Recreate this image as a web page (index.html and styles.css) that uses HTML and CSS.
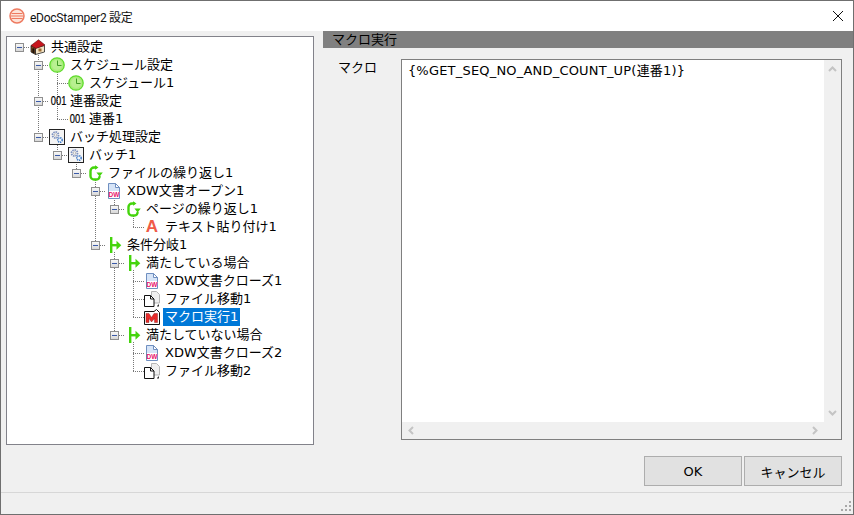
FILE: index.html
```html
<!DOCTYPE html>
<html lang="ja">
<head>
<meta charset="utf-8">
<title>eDocStamper2 設定</title>
<link rel="stylesheet" href="styles.css">
</head>
<body>
<svg class="defs" width="0" height="0" aria-hidden="true">
  <defs>
    <symbol id="i-house" viewBox="0 0 16 16">
      <path d="M1 6.500 5.500 9v6.500L1 13z" fill="#7a4a20" stroke="#222" stroke-width=".8"/>
      <path d="M5.500 9 14.500 6.500V13l-9 2.500z" fill="#f3e3c4" stroke="#222" stroke-width=".8"/>
      <path d="M1 6.500 8.500.8 15 6 6 9.500z" fill="#c8161d" stroke="#5a1010" stroke-width=".6"/>
      <rect x="2.400" y="9.400" width="2" height="4.600" fill="#1c1208"/>
      <rect x="8.500" y="9.500" width="3" height="3" fill="#9a6a30"/>
    </symbol>
    <symbol id="i-clock" viewBox="0 0 16 16">
      <circle cx="8" cy="8" r="7.200" fill="#a8ec7a" stroke="#5fdc2c" stroke-width="1.300"/>
      <circle cx="8" cy="8" r="5" fill="#b8f090"/>
      <path d="M8.500 3.500v5h4" fill="none" stroke="#3f9a24" stroke-width="1"/>
    </symbol>
    <symbol id="i-gears" viewBox="0 0 16 16">
      <rect x=".5" y=".5" width="15" height="15" fill="#f4f4f4" stroke="#222"/>
      <circle cx="6.500" cy="6" r="3" fill="none" stroke="#7f93c0" stroke-width="1.800" stroke-dasharray="1.500 .8"/>
      <circle cx="6.500" cy="6" r="1.200" fill="#fff" stroke="#8a8a8a" stroke-width=".5"/>
      <circle cx="11" cy="11" r="2.200" fill="none" stroke="#3a78c8" stroke-width="1.500" stroke-dasharray="1.200 .7"/>
    </symbol>
    <symbol id="i-loop" viewBox="0 0 16 16">
      <path d="M9.500 2.500H7A3.500 3.500 0 0 0 3.500 6v5A3.500 3.500 0 0 0 7 14.500h2.500A3 3 0 0 0 12.500 11" fill="none" stroke="#44d40c" stroke-width="2.400"/>
      <path d="M8 .3v4.400l3.500-2.200zM9.400 7.500h6.400l-3.200 4z" fill="#44d40c"/>
    </symbol>
    <symbol id="i-branch" viewBox="0 0 16 16">
      <path d="M4 0h2.400v16H4z" fill="#44d40c"/>
      <path d="M6 7h5v2.400H6z" fill="#44d40c"/>
      <path d="M10.500 3.700 15.300 8.200l-4.800 4.500z" fill="#44d40c"/>
    </symbol>
    <symbol id="i-xdw" viewBox="0 0 16 16">
      <path d="M2.500.5h7l4 4v11h-11z" fill="#d6e4f7" stroke="#6f8fc0"/>
      <path d="M9.500.5v4h4z" fill="#fff" stroke="#6f8fc0"/>
      <rect x="3" y="8" width="10" height="7" fill="#fff"/>
      <text x="8" y="14.400" class="dw">DW</text>
    </symbol>
    <symbol id="i-move" viewBox="0 0 16 16">
      <path d="M7.500.5h5l3 3v8.500h-8z" fill="#efefef" stroke="#b5b5b5"/>
      <path d="M.5 4.500h6l3.500 3.500v7.500H.5z" fill="#fff" stroke="#111"/>
      <path d="M6.500 4.500V8H10" fill="none" stroke="#111"/>
      <path d="M12 15.500h1v-1h1v-1h1v2z" fill="#333"/>
    </symbol>
    <symbol id="i-macro" viewBox="0 0 16 16">
      <path d="M.5 2.500H10l2.500-2 3 3v12H.5z" fill="#fff" stroke="#111"/>
      <path d="M2 13.500V4.500h3l2.500 4 2.500-4h3.500v9h-3V9.500L7.500 13 5 9.500v4z" fill="#e82c2c" stroke="#7a1414" stroke-width=".4"/>
    </symbol>
  </defs>
</svg>

<div class="window">
  <header class="titlebar">
    <svg class="app-icon" viewBox="0 0 16 16" width="16" height="16">
      <circle cx="8" cy="8" r="7" fill="#fde3d8" stroke="#ee7a60" stroke-width="1.500"/>
      <path d="M2.500 5.500h11M1.800 8h12.400M2.500 10.500h11" stroke="#ee7a60" stroke-width="1.200"/>
    </svg>
    <span class="title">eDocStamper2 設定</span>
    <svg class="close" viewBox="0 0 10 10" width="10" height="10">
      <path d="M0 0 10 10M10 0 0 10" stroke="#111" stroke-width="1" fill="none"/>
    </svg>
  </header>

  <main class="content">
    <nav class="tree">
      <svg class="connectors" viewBox="7 37 306 407" width="306" height="407" aria-hidden="true">
        <path d="M24 47.500h6M43 65.500h6M43 101.500h6M43 137.500h6M62 155.500h6M81 173.500h6M100 191.500h6M119 209.500h6M100 245.500h6M119 263.500h6M119 335.500h6
                 M57 83.500h11M57 119.500h11M133 227.500h11M133 281.500h11M133 299.500h11M133 317.500h11M133 353.500h11M133 371.500h11
                 M38.500 53v84M57.500 72v47M57.500 145v6M76.500 162v7M95.500 180v61M114.500 198v7M133.500 216v11M114.500 252v79M133.500 270v47M133.500 342v29"
              fill="none" stroke="#777" stroke-width="1" stroke-dasharray="1 1"/>
      </svg>
      <ul class="nodes root">
        <li>
          <div class="row"><span class="toggle"></span><svg class="icon"><use href="#i-house"/></svg><span class="label">共通設定</span></div>
          <ul class="nodes">
            <li>
              <div class="row"><span class="toggle"></span><svg class="icon"><use href="#i-clock"/></svg><span class="label">スケジュール設定</span></div>
              <ul class="nodes">
                <li><div class="row"><span class="toggle none"></span><svg class="icon"><use href="#i-clock"/></svg><span class="label">スケジュール1</span></div></li>
              </ul>
            </li>
            <li>
              <div class="row"><span class="toggle"></span><span class="icon seq">001</span><span class="label">連番設定</span></div>
              <ul class="nodes">
                <li><div class="row"><span class="toggle none"></span><span class="icon seq">001</span><span class="label">連番1</span></div></li>
              </ul>
            </li>
            <li>
              <div class="row"><span class="toggle"></span><svg class="icon"><use href="#i-gears"/></svg><span class="label">バッチ処理設定</span></div>
              <ul class="nodes">
                <li>
                  <div class="row"><span class="toggle"></span><svg class="icon"><use href="#i-gears"/></svg><span class="label">バッチ1</span></div>
                  <ul class="nodes">
                    <li>
                      <div class="row"><span class="toggle"></span><svg class="icon"><use href="#i-loop"/></svg><span class="label">ファイルの繰り返し1</span></div>
                      <ul class="nodes">
                        <li>
                          <div class="row"><span class="toggle"></span><svg class="icon"><use href="#i-xdw"/></svg><span class="label">XDW文書オープン1</span></div>
                          <ul class="nodes">
                            <li>
                              <div class="row"><span class="toggle"></span><svg class="icon"><use href="#i-loop"/></svg><span class="label">ページの繰り返し1</span></div>
                              <ul class="nodes">
                                <li><div class="row"><span class="toggle none"></span><span class="icon letter">A</span><span class="label">テキスト貼り付け1</span></div></li>
                              </ul>
                            </li>
                          </ul>
                        </li>
                        <li>
                          <div class="row"><span class="toggle"></span><svg class="icon"><use href="#i-branch"/></svg><span class="label">条件分岐1</span></div>
                          <ul class="nodes">
                            <li>
                              <div class="row"><span class="toggle"></span><svg class="icon"><use href="#i-branch"/></svg><span class="label">満たしている場合</span></div>
                              <ul class="nodes">
                                <li><div class="row"><span class="toggle none"></span><svg class="icon"><use href="#i-xdw"/></svg><span class="label">XDW文書クローズ1</span></div></li>
                                <li><div class="row"><span class="toggle none"></span><svg class="icon"><use href="#i-move"/></svg><span class="label">ファイル移動1</span></div></li>
                                <li><div class="row"><span class="toggle none"></span><svg class="icon"><use href="#i-macro"/></svg><span class="label selected">マクロ実行1</span></div></li>
                              </ul>
                            </li>
                            <li>
                              <div class="row"><span class="toggle"></span><svg class="icon"><use href="#i-branch"/></svg><span class="label">満たしていない場合</span></div>
                              <ul class="nodes">
                                <li><div class="row"><span class="toggle none"></span><svg class="icon"><use href="#i-xdw"/></svg><span class="label">XDW文書クローズ2</span></div></li>
                                <li><div class="row"><span class="toggle none"></span><svg class="icon"><use href="#i-move"/></svg><span class="label">ファイル移動2</span></div></li>
                              </ul>
                            </li>
                          </ul>
                        </li>
                      </ul>
                    </li>
                  </ul>
                </li>
              </ul>
            </li>
          </ul>
        </li>
      </ul>
    </nav>

    <section class="detail">
      <h2 class="detail-head">マクロ実行</h2>
      <div class="field">
        <label class="field-label">マクロ</label>
        <div class="editor">
          <div class="editor-main">
            <div class="editor-text">{%GET_SEQ_NO_AND_COUNT_UP(連番1)}</div>
            <div class="vbar">
              <svg viewBox="0 0 9 6" width="9" height="6"><path d="M1 5 4.500 1.500 8 5" fill="none" stroke="#c4c4c4" stroke-width="2"/></svg>
              <svg viewBox="0 0 9 6" width="9" height="6"><path d="M1 1 4.500 4.500 8 1" fill="none" stroke="#c4c4c4" stroke-width="2"/></svg>
            </div>
          </div>
          <div class="hbar">
            <svg viewBox="0 0 6 9" width="6" height="9"><path d="M5 1 1.500 4.500 5 8" fill="none" stroke="#c4c4c4" stroke-width="2"/></svg>
            <svg viewBox="0 0 6 9" width="6" height="9"><path d="M1 1 4.500 4.500 1 8" fill="none" stroke="#c4c4c4" stroke-width="2"/></svg>
          </div>
        </div>
      </div>
    </section>
  </main>

  <div class="actions">
    <button class="btn" type="button">OK</button>
    <button class="btn" type="button">キャンセル</button>
  </div>

  <footer class="status">
    <svg class="grip" viewBox="0 0 11 11" width="11" height="11">
      <path d="M8 0h2v2H8zM4 4h2v2H4zM8 4h2v2H8zM0 8h2v2H0zM4 8h2v2H4zM8 8h2v2H8z" fill="#a8a8a8"/>
    </svg>
  </footer>
</div>
</body>
</html>
```

FILE: styles.css
```css
* { box-sizing: border-box; }
html, body { margin: 0; padding: 0; }
body {
  width: 854px;
  height: 515px;
  overflow: hidden;
  font-family: "DejaVu Sans", "Noto Sans CJK JP", sans-serif;
  font-size: 13px;
  color: #000;
  background: #f0f0f0;
}
.defs { position: absolute; }
.dw {
  font-family: "Liberation Sans", sans-serif;
  font-size: 6.500px;
  font-weight: 700;
  fill: #e8106a;
  text-anchor: middle;
}

.window {
  width: 854px;
  height: 515px;
  display: flex;
  flex-direction: column;
  border: 1px solid #6f6f6f;
  background: #f0f0f0;
}

.titlebar {
  flex: 0 0 30px;
  display: flex;
  align-items: center;
  background: #fff;
  padding: 0 10px 0 8px;
}
.title {
  margin-left: 5px;
  font-family: "Roboto", "Noto Sans CJK JP", sans-serif;
  font-size: 12px;
  letter-spacing: -.25px;
  color: #111;
}
.close { margin-left: auto; }

.content {
  flex: 0 0 414px;
  display: flex;
  min-height: 0;
}

.tree {
  position: relative;
  width: 308px;
  height: 409px;
  margin: 5px 0 0 5px;
  border: 1px solid #82828a;
  background: #fff;
  padding: 1px 0 0 3px;
  overflow: hidden;
}
.connectors { position: absolute; left: 0; top: 0; }
.nodes { list-style: none; margin: 0; padding: 0 0 0 19px; position: relative; }
.nodes.root { padding-left: 0; }
.row {
  display: flex;
  align-items: center;
  height: 18px;
}
.toggle {
  flex: 0 0 9px;
  width: 9px;
  height: 9px;
  margin: 0 5px;
  border: 1px solid #8f8f8f;
  background: linear-gradient(#f8f8f8, #d8d8d8);
  position: relative;
}
.toggle::after {
  content: "";
  position: absolute;
  left: 1px;
  top: 3px;
  width: 5px;
  height: 1px;
  background: #3a5aa8;
}
.toggle.none { border: 0; background: none; }
.toggle.none::after { display: none; }
.icon {
  flex: 0 0 16px;
  width: 16px;
  height: 16px;
  margin-left: 1px;
  margin-right: 3px;
}
.seq {
  font-family: "Liberation Sans", sans-serif;
  font-size: 12px;
  line-height: 16px;
  text-align: center;
  color: #000;
  transform: scaleX(.78);
  -webkit-text-stroke: .2px #000;
}
.letter {
  font-family: "Liberation Sans", sans-serif;
  font-weight: 700;
  font-size: 17px;
  line-height: 16px;
  text-align: center;
  color: #f05a48;
}
.label {
  height: 18px;
  line-height: 17px;
  padding: 0 2px;
  white-space: nowrap;
}
.label.selected { background: #0078d7; color: #fff; }

.detail {
  flex: 1;
  min-width: 0;
  margin-left: 9px;
  display: flex;
  flex-direction: column;
}
.detail-head {
  margin: 0;
  height: 17px;
  padding-left: 9px;
  background: #808080;
  font-size: 13px;
  font-weight: 400;
  line-height: 17px;
  color: #000;
}
.field {
  flex: 1;
  display: flex;
  padding: 11px 11px 0 15px;
}
.field-label {
  width: 63px;
  line-height: 18px;
}
.editor {
  width: 442px;
  height: 381px;
  display: flex;
  flex-direction: column;
  border: 1px solid #7f7f7f;
  background: #f0f0f0;
}
.editor-main { flex: 1; display: flex; min-height: 0; }
.editor-text {
  flex: 1;
  background: #fff;
  padding: 2px 0 0 6px;
  line-height: 18px;
  font-size: 13px;
  letter-spacing: .2px;
}
.vbar {
  flex: 0 0 17px;
  display: flex;
  flex-direction: column;
  justify-content: space-between;
  align-items: center;
  padding: 6px 0;
}
.hbar {
  flex: 0 0 17px;
  display: flex;
  justify-content: space-between;
  align-items: center;
  padding: 0 23px 0 6px;
}

.actions {
  flex: 0 0 47px;
  display: flex;
  justify-content: flex-end;
  gap: 2px;
  padding: 11px 11px 0 0;
}
.btn {
  width: 98px;
  height: 30px;
  border: 1px solid #adadad;
  background: #e1e1e1;
  font-family: inherit;
  font-size: 13px;
  color: #000;
  padding: 0;
}

.status {
  flex: 1;
  display: flex;
  justify-content: flex-end;
  align-items: flex-end;
  border-top: 1px solid #d7d7d7;
  padding: 0 1px 2px 0;
}
```
